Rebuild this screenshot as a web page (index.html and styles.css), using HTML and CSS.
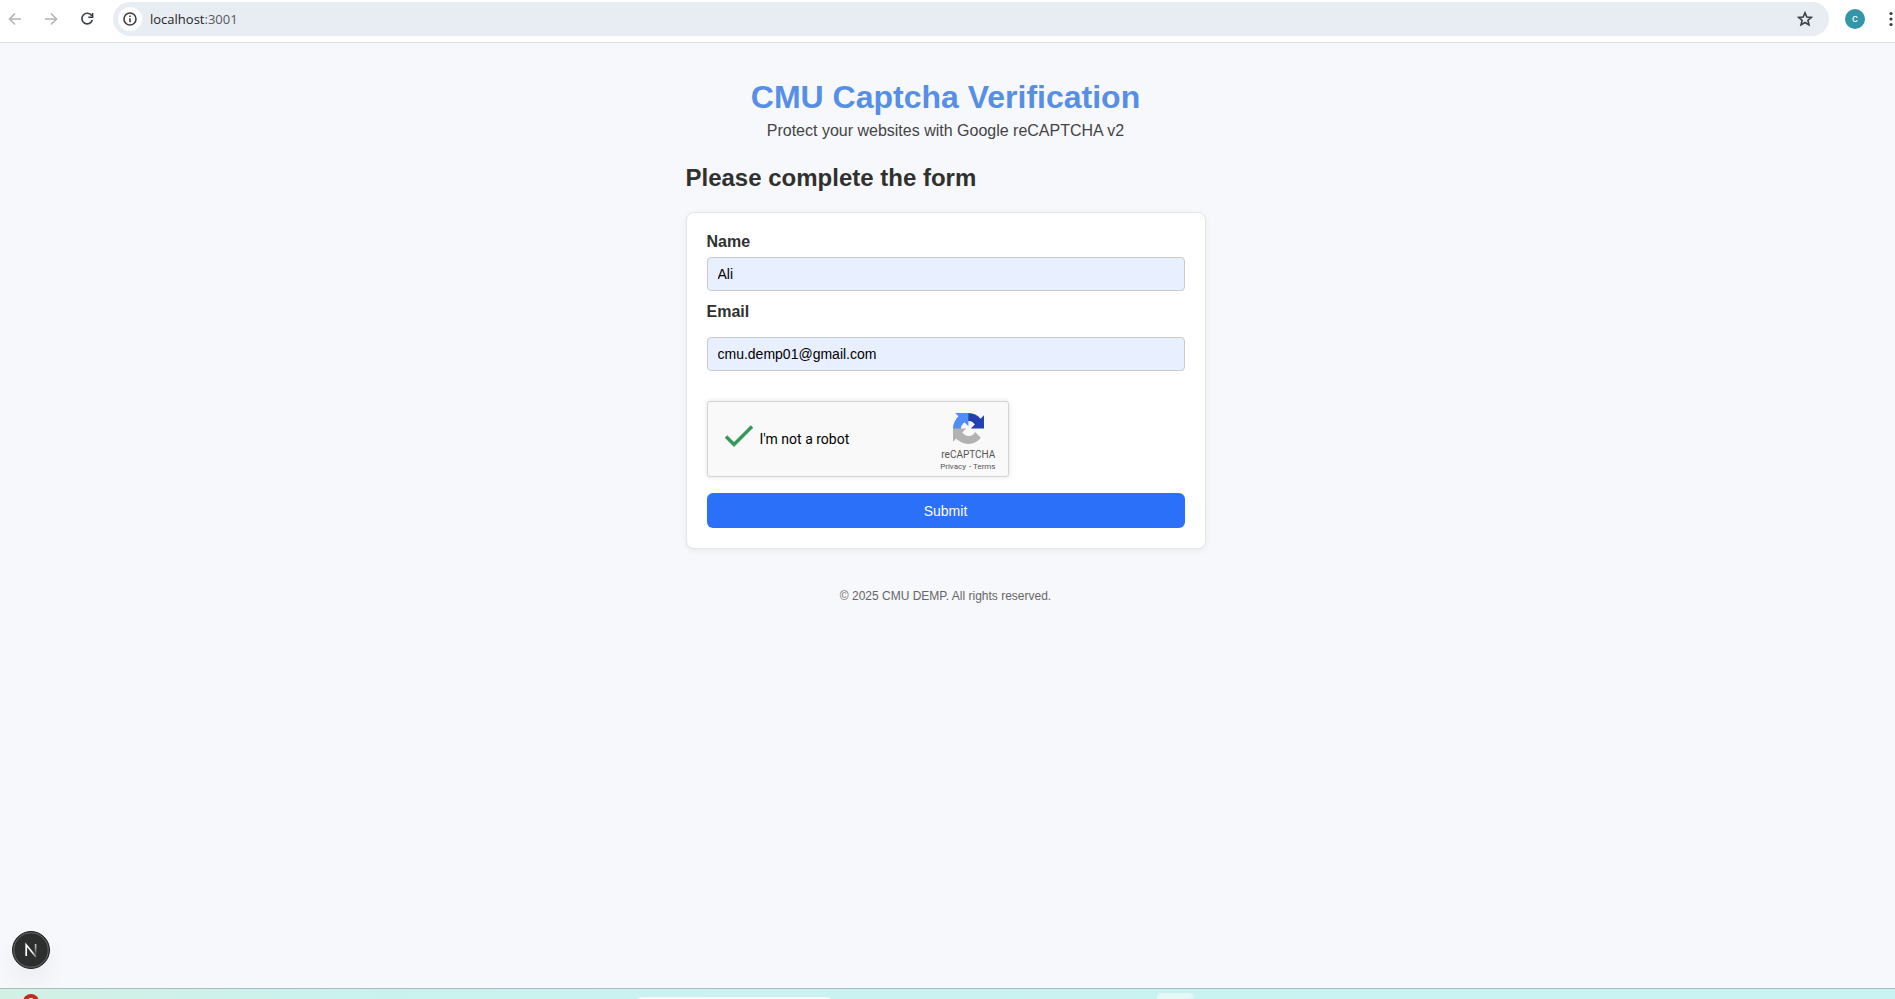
FILE: index.html
```html
<!DOCTYPE html>
<html lang="en">
<head>
<meta charset="utf-8">
<title>CMU Captcha Verification</title>
<link rel="stylesheet" href="styles.css">
</head>
<body>
<header class="toolbar">
  <button class="nav-btn" type="button" aria-label="Back" disabled>
    <svg width="14" height="14" viewBox="0 0 14 14"><path d="M13 7H2M7 1.5 1.5 7 7 12.500"/></svg>
  </button>
  <button class="nav-btn" type="button" aria-label="Forward" disabled>
    <svg width="14" height="14" viewBox="0 0 14 14"><path d="M1 7h11M7 1.500 12.500 7 7 12.500"/></svg>
  </button>
  <button class="nav-btn nav-btn-active" type="button" aria-label="Reload">
    <svg width="14" height="14" viewBox="0 0 14 14"><path d="M11.600 3.600A5.300 5.300 0 1 0 12.300 8M12.600 1v4.200H8.300"/></svg>
  </button>
  <div class="address">
    <button class="site-info" type="button" aria-label="Site information">
      <svg width="14" height="14" viewBox="0 0 14 14"><circle cx="7" cy="7" r="6"/><path d="M7 6.300v4M7 3.500v1.500"/></svg>
    </button>
    <span class="url">localhost<span class="port">:3001</span></span>
    <button class="star" type="button" aria-label="Bookmark">
      <svg width="16" height="16" viewBox="0 0 16 16"><path d="m8 1.800 1.800 4.200 4.600.4-3.500 3 1.100 4.500L8 11.500l-4 2.400 1.100-4.500-3.500-3 4.600-.4z"/></svg>
    </button>
  </div>
  <button class="avatar" type="button">c</button>
  <button class="menu" type="button" aria-label="Menu">
    <svg width="4" height="16" viewBox="0 0 4 16"><circle cx="2" cy="2.500" r="1.600"/><circle cx="2" cy="8" r="1.600"/><circle cx="2" cy="13.500" r="1.600"/></svg>
  </button>
</header>

<main class="page">
  <h1 class="title">CMU Captcha Verification</h1>
  <p class="subtitle">Protect your websites with Google reCAPTCHA v2</p>
  <section class="content">
    <h2 class="heading">Please complete the form</h2>
    <form class="card">
      <label class="label" for="name">Name</label>
      <input class="field" id="name" type="text" value="Ali">
      <label class="label label-email" for="email">Email</label>
      <input class="field" id="email" type="email" value="cmu.demp01@gmail.com">
      <div class="captcha">
        <svg class="check" width="30" height="24" viewBox="0 0 30 24"><path d="M2 12.500 10 20.500 28 2.500"/></svg>
        <span class="captcha-text">I'm not a robot</span>
        <div class="brand">
          <svg width="31" height="31" viewBox="0 0 64 64">
            <path fill="#233fb0" d="M64 31.955l-.033-1.370V4.687l-7.160 7.160C50.948 4.674 42.033.093 32.050.093c-10.400 0-19.622 4.960-25.458 12.640l11.736 11.860a15.550 15.550 0 0 1 4.754-5.334c2.050-1.600 4.952-2.906 8.968-2.906.485 0 .860.057 1.135.163 4.976.393 9.288 3.140 11.828 7.124l-8.307 8.307L64 31.953"/>
            <path fill="#528df7" d="M31.862.094l-1.370.033H4.594l7.160 7.160C4.580 13.147 0 22.060 0 32.046c0 10.400 4.960 19.622 12.640 25.458L24.500 45.768a15.550 15.550 0 0 1-5.334-4.754c-1.600-2.050-2.906-4.952-2.906-8.968 0-.485.057-.860.163-1.135.393-4.976 3.140-9.288 7.124-11.828l8.307 8.307L31.860.095"/>
            <path fill="#b2b2b2" d="M.001 32.045l.033 1.370v25.898l7.160-7.160c5.860 7.173 14.774 11.754 24.760 11.754 10.400 0 19.622-4.960 25.458-12.640l-11.736-11.860a15.550 15.550 0 0 1-4.754 5.334c-2.050 1.600-4.952 2.906-8.968 2.906-.485 0-.860-.057-1.135-.163-4.976-.393-9.288-3.140-11.828-7.124l8.307-8.307c-10.522.040-22.400.066-27.295-.005"/>
          </svg>
          <span class="brand-name">reCAPTCHA</span>
          <span class="brand-links"><a href="#privacy">Privacy</a> - <a href="#terms">Terms</a></span>
        </div>
      </div>
      <button class="submit" type="submit">Submit</button>
    </form>
  </section>
  <footer class="copyright">© 2025 CMU DEMP. All rights reserved.</footer>
</main>

<button class="dev-badge" type="button" aria-label="Open developer tools">
  <svg width="38" height="38" viewBox="0 0 38 38">
    <defs>
      <linearGradient id="fade" x1="0" y1="0" x2="0" y2="1"><stop offset="0.200" stop-color="#bbb"/><stop offset="1" stop-color="#bbb" stop-opacity="0.100"/></linearGradient>
      <linearGradient id="slant" x1="0" y1="0" x2="1" y2="1"><stop offset="0.600" stop-color="#fff"/><stop offset="1" stop-color="#fff" stop-opacity="0.300"/></linearGradient>
    </defs>
    <circle cx="19" cy="19" r="18.500" fill="#2d2f2e" stroke="#222"/>
    <circle cx="19" cy="19" r="17.200" fill="none" stroke="#686a69"/>
    <path d="M14.200 25V13.800L24 26" fill="none" stroke="url(#slant)" stroke-width="1.700"/>
    <rect x="22.800" y="13" width="1.600" height="11" fill="url(#fade)"/>
  </svg>
</button>

<div class="taskbar">
  <span class="alert"></span>
  <span class="search"></span>
  <span class="task"></span>
</div>
</body>
</html>
```
FILE: styles.css
```css
* {
  box-sizing: border-box;
}

body {
  margin: 0;
  min-height: 100vh;
  display: flex;
  flex-direction: column;
  overflow: hidden;
  background: #f7f8fc;
  color: #2f312f;
  font-family: Arial, "Liberation Sans", sans-serif;
}

button {
  padding: 0;
  border: 0;
  background: none;
  font-family: inherit;
  display: flex;
  align-items: center;
  justify-content: center;
}

.toolbar {
  display: flex;
  align-items: center;
  height: 43px;
  padding: 0 2px 5px 8px;
  background: #fff;
  border-bottom: 1px solid #dcdee1;
}

.nav-btn {
  width: 14px;
  margin-right: 22px;
}

.nav-btn svg,
.site-info svg,
.star svg {
  fill: none;
  stroke: #b4b4b4;
  stroke-width: 1.6px;
}

.nav-btn-active {
  margin-right: 19px;
}

.nav-btn-active svg,
.site-info svg,
.star svg {
  stroke: #3c3f42;
}

.address {
  flex: 1;
  height: 34px;
  display: flex;
  align-items: center;
  padding: 0 16px 0 5px;
  border-radius: 17px;
  background: #e8edf4;
}

.site-info {
  width: 24px;
  height: 24px;
  border-radius: 50%;
  background: #fff;
}

.url {
  flex: 1;
  margin-left: 8px;
  color: #1f1f1f;
  font: 13px/18px "Open Sans", sans-serif;
}

.port {
  color: #55585c;
}

.avatar {
  width: 20px;
  height: 20px;
  margin: 0 24px 0 16px;
  border-radius: 50%;
  background: #3096a8;
  color: #fff;
  font: 11px/20px Roboto, sans-serif;
}

.menu svg {
  fill: #3c3f42;
}

.page {
  flex: 1;
  padding: 36px 20px 0 16px;
  text-align: center;
}

.title {
  margin: 0;
  color: #568fe5;
  font-size: 32px;
  line-height: 36px;
}

.subtitle {
  margin: 4px 0 0;
  color: #444;
  font-size: 16px;
  line-height: 24px;
}

.content {
  max-width: 520px;
  margin: 0 auto;
  text-align: left;
}

.heading {
  margin: 19px 0 18px;
  font-size: 24px;
  line-height: 32px;
}

.card {
  display: flex;
  flex-direction: column;
  padding: 20px;
  border: 1px solid #e4e5e8;
  border-radius: 8px;
  background: #fff;
  box-shadow: 0 2px 6px rgba(0, 0, 0, 0.06);
}

.label {
  margin-bottom: 6px;
  font-size: 16px;
  font-weight: bold;
  line-height: 18px;
}

.label-email {
  margin: 12px 0 16px;
}

.field {
  width: 100%;
  height: 34px;
  padding: 0 10px;
  border: 1px solid #c8cad0;
  border-radius: 4px;
  background: #e8effe;
  color: #000;
  font: 14px/18px Arial, "Liberation Sans", sans-serif;
}

.captcha {
  display: flex;
  align-items: center;
  width: 302px;
  height: 76px;
  margin: 30px 0 16px;
  padding: 0 11px 0 16px;
  border: 1px solid #d3d3d3;
  border-radius: 3px;
  background: #f9f9f9;
  box-shadow: 0 0 4px 1px rgba(0, 0, 0, 0.08);
  font-family: Roboto, sans-serif;
}

.check {
  margin-bottom: 6px;
  fill: none;
  stroke: #349a57;
  stroke-width: 3.4px;
}

.captcha-text {
  flex: 1;
  margin-left: 6px;
  color: #000;
  font-size: 14px;
  line-height: 18px;
}

.brand {
  display: flex;
  flex-direction: column;
  align-items: center;
  padding-top: 7px;
  color: #555;
}

.brand-name {
  margin-top: 5px;
  font-size: 10px;
  line-height: 12px;
}

.brand-links {
  font-size: 8px;
  line-height: 12px;
}

.brand-links a {
  margin: 0 1px 0 0;
  color: inherit;
  text-decoration: none;
}

.submit {
  height: 35px;
  border-radius: 6px;
  background: #2a70f8;
  color: #fff;
  font-size: 14px;
}

.copyright {
  margin-top: 39px;
  color: #666;
  font-size: 12px;
  line-height: 16px;
}

.dev-badge {
  position: fixed;
  left: 12px;
  bottom: 30px;
  border-radius: 50%;
  box-shadow: 0 12px 24px rgba(0, 0, 0, 0.05);
}

.taskbar {
  position: relative;
  height: 11px;
  overflow: hidden;
  border-top: 1px solid #a7bcbd;
  background: linear-gradient(90deg, #d3f0e4, #c9f2ef 20%, #c9f3f3);
}

.alert,
.search,
.task {
  position: absolute;
}

.alert {
  left: 23px;
  top: 5px;
  width: 16px;
  height: 16px;
  border-radius: 50%;
  background: #c42b1c;
}

.alert::after {
  content: "";
  position: absolute;
  left: 5px;
  top: 4px;
  width: 6px;
  height: 4px;
  border-radius: 3px 3px 0 0;
  background: #fff;
}

.search {
  left: 631px;
  top: 8px;
  width: 206px;
  height: 24px;
  border-radius: 12px;
  background: #f7fefe;
}

.task {
  left: 1157px;
  top: 4px;
  width: 34px;
  height: 24px;
  border-radius: 4px;
  background: #e5f8f8;
  box-shadow: 3px 0 #ddf6f6;
}
```
